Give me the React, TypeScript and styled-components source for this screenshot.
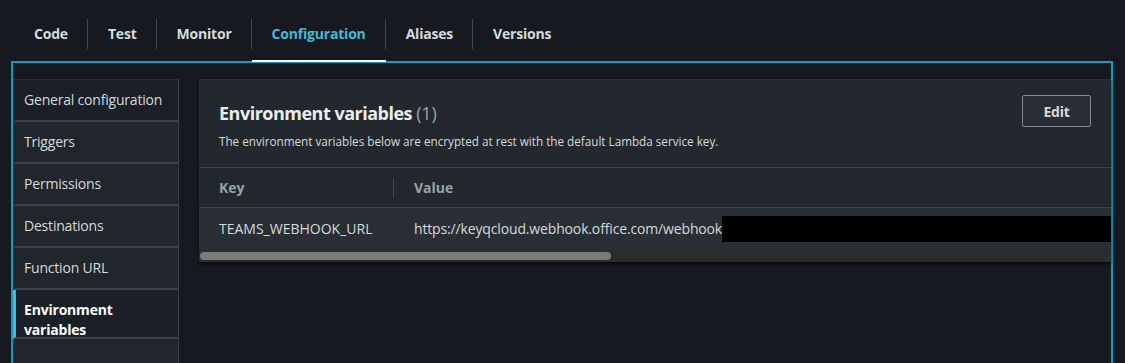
import { FC } from "react";
import styled, { createGlobalStyle } from "styled-components";

const GlobalStyle = createGlobalStyle`
  html, body {
    margin: 0;
    padding: 0;
    background: #16191f;
    overflow: hidden;
  }
  body {
    font-family: "Open Sans", "Noto Sans", sans-serif;
    color: #d5dbdb;
  }
`;

const tabs = ["Code", "Test", "Monitor", "Configuration", "Aliases", "Versions"];

const navItems = [
  "General configuration",
  "Triggers",
  "Permissions",
  "Destinations",
  "Function URL",
  "Environment variables",
];

const App: FC = () => {
  return (
    <>
      <GlobalStyle />
      <Page>
        <TabBar>
          {tabs.map((t, i) => (
            <Tab key={t} $active={t === "Configuration"} $first={i === 0}>
              {t}
            </Tab>
          ))}
        </TabBar>
        <Frame>
          <SideNav>
            {navItems.map((n, i) => (
              <NavItem
                key={n}
                $active={n === "Environment variables"}
                $first={i === 0}
              >
                {n === "Environment variables" ? (
                  <>
                    Environment
                    <br />
                    variables
                  </>
                ) : (
                  n
                )}
              </NavItem>
            ))}
            <NavItem />
          </SideNav>
          <Panel>
            <PanelHeader>
              <div>
                <Title>
                  Environment variables <Count>(1)</Count>
                </Title>
                <Description>
                  The environment variables below are encrypted at rest with the
                  default Lambda service key.
                </Description>
              </div>
              <EditButton>Edit</EditButton>
            </PanelHeader>
            <Table>
              <HeadCell>Key</HeadCell>
              <HeadCell $divider>Value</HeadCell>
              <Cell>TEAMS_WEBHOOK_URL</Cell>
              <Cell $value>
                https://keyqcloud.webhook.office.com/webhook
                <Redacted />
              </Cell>
            </Table>
            <ScrollTrack>
              <ScrollThumb />
            </ScrollTrack>
          </Panel>
        </Frame>
      </Page>
    </>
  );
};

export default App;

const Page = styled.div`
  width: 1125px;
  height: 363px;
  overflow: hidden;
`;

const TabBar = styled.div`
  display: flex;
  align-items: stretch;
  height: 61px;
  padding-left: 14px;
  box-sizing: border-box;
`;

const Tab = styled.div<{ $active?: boolean; $first?: boolean }>`
  position: relative;
  display: flex;
  align-items: center;
  padding: 6px 20px 0 20px;
  font-size: 14px;
  font-weight: 700;
  letter-spacing: -0.2px;
  color: ${(p) => (p.$active ? "#44b9d6" : "#d5dbdb")};

  &::before {
    content: ${(p) => (p.$first ? "none" : '""')};
    position: absolute;
    left: -1px;
    top: 19px;
    height: 30px;
    width: 1px;
    background: #414750;
  }

  &::after {
    content: ${(p) => (p.$active ? '""' : "none")};
    position: absolute;
    left: 0;
    right: 0;
    bottom: -1px;
    height: 2px;
    background: #ffffff;
    z-index: 2;
  }
`;

const Frame = styled.div`
  display: flex;
  gap: 20px;
  margin-left: 11px;
  width: 1102px;
  height: 320px;
  box-sizing: border-box;
  border: 2px solid #0a9ec7;
  border-bottom: none;
  padding-top: 16px;
`;

const SideNav = styled.div`
  display: flex;
  flex-direction: column;
  width: 166px;
  flex-shrink: 0;
  border-top: 1px solid #2a2e35;
  border-right: 1px solid #3a4048;
  box-sizing: border-box;
  background: #21252c;
`;

const NavItem = styled.div<{ $active?: boolean; $first?: boolean }>`
  padding: 10px 11px 10px 8px;
  min-height: 20px;
  font-size: 14px;
  line-height: 20px;
  letter-spacing: -0.2px;
  color: ${(p) => (p.$active ? "#ffffff" : "#d5dbdb")};
  font-weight: ${(p) => (p.$active ? 700 : 400)};
  background: ${(p) => (p.$active || p.$first ? "#1b1f27" : "#21252c")};
  border-bottom: 2px solid #3d434b;
  border-left: 3px solid ${(p) => (p.$active ? "#44b9d6" : "transparent")};
`;

const Panel = styled.div`
  flex: 1;
  min-width: 0;
  align-self: flex-start;
  background: #23272e;
  border-top: 1px solid #2c3038;
  overflow: hidden;
  box-shadow: 0 2px 3px rgba(0, 0, 0, 0.6);
`;

const PanelHeader = styled.div`
  display: flex;
  justify-content: space-between;
  align-items: flex-start;
  padding: 15px 20px 0 20px;
  height: 88px;
  box-sizing: border-box;
  border-bottom: 1px solid #3f454e;
`;

const Title = styled.h2`
  margin: 6px 0 0 0;
  font-size: 18px;
  line-height: 24px;
  font-weight: 700;
  letter-spacing: -0.5px;
  color: #eaeded;
`;

const Count = styled.span`
  font-weight: 400;
  letter-spacing: -0.2px;
  color: #95a5a6;
`;

const Description = styled.p`
  margin: 8px 0 0 0;
  font-size: 11.7px;
  line-height: 16px;
  color: #d5dbdb;
`;

const EditButton = styled.button`
  width: 69px;
  height: 32px;
  background: #2a2d33;
  border: 1px solid #7d8998;
  border-radius: 2px;
  color: #d5dbdb;
  font-family: inherit;
  font-size: 14px;
  font-weight: 700;
  letter-spacing: -0.2px;
`;

const Table = styled.div`
  display: grid;
  grid-template-columns: 194px 1fr;
`;

const HeadCell = styled.div<{ $divider?: boolean }>`
  position: relative;
  height: 39px;
  display: flex;
  align-items: center;
  padding-left: ${(p) => (p.$divider ? "21px" : "20px")};
  font-size: 14px;
  font-weight: 700;
  color: #95a5a6;
  border-bottom: 1px solid #3f454e;

  &::before {
    content: ${(p) => (p.$divider ? '""' : "none")};
    position: absolute;
    left: 0;
    top: 10px;
    height: 20px;
    width: 1px;
    background: #414750;
  }
`;

const Cell = styled.div<{ $value?: boolean }>`
  display: flex;
  align-items: center;
  height: 41px;
  padding-left: ${(p) => (p.$value ? "21px" : "20px")};
  font-size: 14px;
  letter-spacing: ${(p) => (p.$value ? "-0.15px" : "0")};
  color: #d5dbdb;
  background: #2a2e35;
  white-space: nowrap;
  overflow: hidden;
`;

const Redacted = styled.span`
  display: inline-block;
  flex-shrink: 0;
  width: 400px;
  height: 26px;
  margin-top: 1px;
  background: #000;
`;

const ScrollTrack = styled.div`
  height: 13px;
  background: #2c2c2d;
  padding: 3px 0 0 1px;
  box-sizing: border-box;
`;

const ScrollThumb = styled.div`
  width: 411px;
  height: 8px;
  border-radius: 4px;
  background: #7b7b7b;
`;
